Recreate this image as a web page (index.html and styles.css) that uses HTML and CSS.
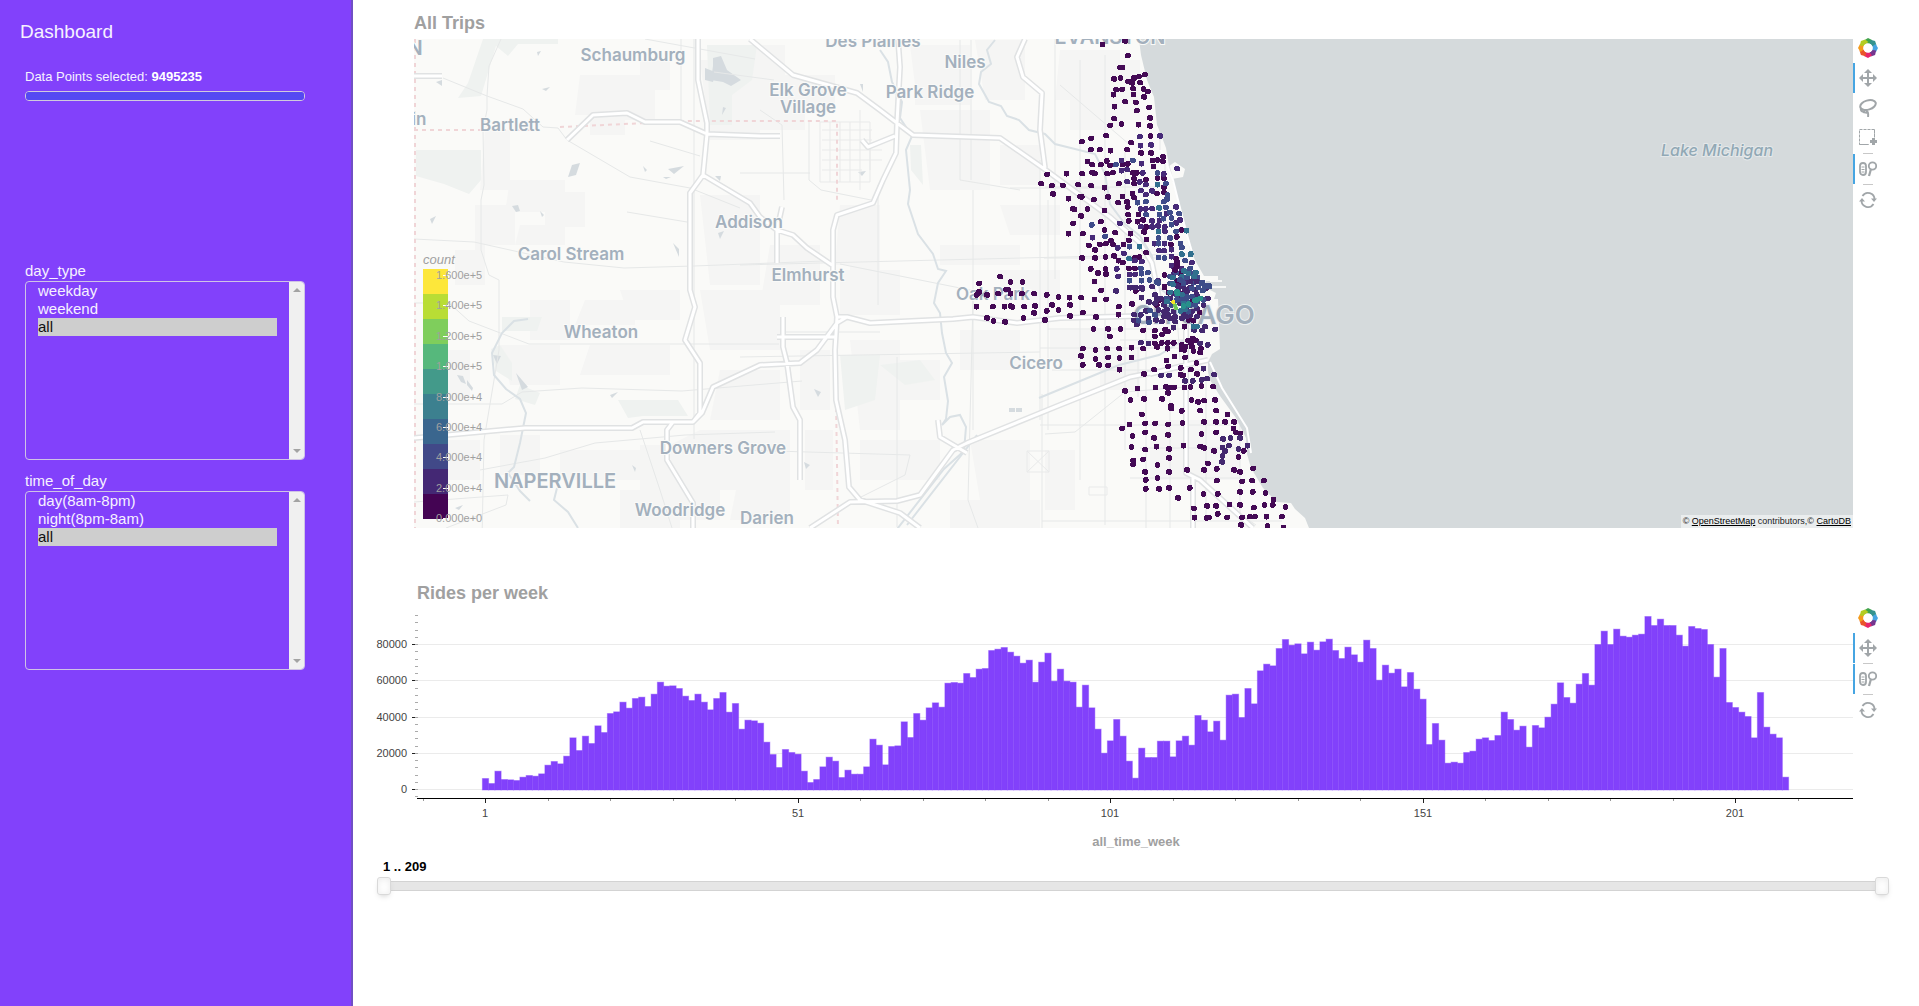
FILE: index.html
```html
<!DOCTYPE html>
<html lang="en">
<head>
<meta charset="utf-8">
<title>Dashboard</title>
<link rel="stylesheet" href="styles.css">
</head>
<body>
<svg class="defs" aria-hidden="true">
  <symbol id="i-logo" viewBox="-10 -10 20 20">
    <path d="M-4-7.500 0-10 4-8 4.500-4-2-4.800z" fill="#3fa34d"/>
    <path d="M-4-7.500 0-10 4-8 4.500-4-2-4.800z" fill="#34948f" transform="rotate(45)"/>
    <path d="M-4-7.500 0-10 4-8 4.500-4-2-4.800z" fill="#46a5e2" transform="rotate(90)"/>
    <path d="M-4-7.500 0-10 4-8 4.500-4-2-4.800z" fill="#75378f" transform="rotate(135)"/>
    <path d="M-4-7.500 0-10 4-8 4.500-4-2-4.800z" fill="#e6256c" transform="rotate(180)"/>
    <path d="M-4-7.500 0-10 4-8 4.500-4-2-4.800z" fill="#e9552b" transform="rotate(225)"/>
    <path d="M-4-7.500 0-10 4-8 4.500-4-2-4.800z" fill="#f39b1d" transform="rotate(270)"/>
    <path d="M-4-7.500 0-10 4-8 4.500-4-2-4.800z" fill="#b4cc22" transform="rotate(315)"/>
    <circle r="4.600" fill="#fff"/>
  </symbol>
  <symbol id="i-pan" viewBox="0 0 18 18">
    <path d="M9 0l4 4h-3v4h4V5l4 4-4 4v-3h-4v4h3l-4 4-4-4h3v-4H4v3L0 9l4-4v3h4V4H5z" fill="#a1a6a9"/>
  </symbol>
  <symbol id="i-lasso" viewBox="0 0 18 18">
    <g fill="none" stroke="#a1a6a9" stroke-width="2"><ellipse cx="9" cy="6" rx="8" ry="4.600" transform="rotate(-17 9 6)"/><path d="M2 9q-1 4 4 3.500M5 11q5 0 4 7M4 13l5 1"/></g>
  </symbol>
  <symbol id="i-box" viewBox="0 0 18 18">
    <path d="M.5 .5h15v15H.5z" fill="none" stroke="#a1a6a9" stroke-dasharray="3 1"/>
    <path d="M10 9h8v9h-8z" fill="#fff"/>
    <path d="M15.500 .5v6M.5 15.500h9" stroke="#a1a6a9" stroke-dasharray="3 1"/>
    <path d="M13 9h3v2h2v3h-2v2h-3v-2h-2v-3h2z" fill="#a1a6a9"/>
  </symbol>
  <symbol id="i-wheel" viewBox="0 0 18 18">
    <g fill="none" stroke="#a1a6a9" stroke-width="1.800"><rect x="1" y="3" width="6" height="12" rx="3"/><circle cx="13.500" cy="6" r="3.700"/><path d="M12 9l-2 7" stroke-width="2.200"/><path d="M2.500 7h3M2.500 9.500h3M2.500 12h3" stroke-width="1"/></g>
  </symbol>
  <symbol id="i-reset" viewBox="0 0 18 18">
    <g fill="none" stroke="#a1a6a9" stroke-width="1.800"><path d="M3.500 5A6.500 6.500 0 0 1 15.500 8.500M14.500 13A6.500 6.500 0 0 1 2.500 9.500"/></g>
    <path d="M12 7.500h6l-3 3.500zM0 10.500h6L3 7z" fill="#a1a6a9"/>
  </symbol>
</svg>

<div class="page">
  <aside class="sidebar">
    <h1 class="brand">Dashboard</h1>
    <div class="points">
      <label for="points-bar">Data Points selected: <b>9495235</b></label>
      <progress id="points-bar" value="1" max="1"></progress>
    </div>
    <div class="filters">
      <div class="filter">
        <label for="day-type">day_type</label>
        <div class="listbox">
          <select id="day-type" multiple>
            <option>weekday</option><option>weekend</option><option selected>all</option>
          </select>
          <span class="scrollbar"></span>
        </div>
      </div>
      <div class="filter">
        <label for="time-of-day">time_of_day</label>
        <div class="listbox">
          <select id="time-of-day" multiple>
            <option>day(8am-8pm)</option><option>night(8pm-8am)</option><option selected>all</option>
          </select>
          <span class="scrollbar"></span>
        </div>
      </div>
    </div>
  </aside>

  <main class="main">
    <section>
      <h2 class="title title-map">All Trips</h2>
      <div class="plot-row plot-row-map">
        <div class="map">
          <svg class="map-svg" viewBox="414 39 1439 489" role="img" aria-label="Map of all trips">
            <rect x="414" y="39" width="1439" height="489" fill="#fafaf8"/>
            <g fill="#f5f5f4">
              <path d="M580 75h60v-15h30v30h-15v30h-30v15h-35v-20h-15zM510 180h55v12h20v35h-40v-15h-40zM475 205h40v40h-30v40h-30v-35h20zM745 45h40v30h50v35h-30v20h-45v-30h-15zM600 100h20v15h-20zM520 225h45v20h-50zM485 130h25v60h-30z"/>
              <path d="M700 60h60v80h-50zM700 195h60v90h-50zM770 245h50v60h-60zM840 205h40v80h-30v-20h-15zM840 270h60v45h-60zM700 290h80v60h-70zM720 370h60v50h-70zM585 300h50v25h-60zM590 345h80v30h-90zM500 345h60v40h-50zM430 350h40v50h-40zM530 300h40v40h-40zM620 290h60v30h-50z"/>
              <path d="M700 430h90v60h-70v30h-60v-70zM560 450h80v30h-80zM500 435h40v40h-40zM430 440h50v40h-50zM620 490h60v38h-60zM740 470h50v50h-60zM800 350h30v60h-30zM805 430h28v60h-28zM850 340h50v90h-40zM880 360h60v40h-60zM860 440h80v40h-80zM950 500h90v28h-90zM640 445h30v50h-30z"/>
              <path d="M910 45h60v60h-55v-20zM975 40h50v60h-40zM920 110h70v80h-60zM1000 145h40v40h-40zM1060 50h60v80h-50v-30h-15zM940 245h80v20h-80zM1000 205h60v30h-50zM1070 180h60v40h-60zM1100 60h40v60h-40zM960 330h60v40h-60zM1050 330h60v30h-60zM970 440h60v60h-50zM1045 450h30v60h-30zM1100 350h40v40h-40zM1150 420h60v60h-60zM1210 440h30v40h-30zM1000 270h60v30h-60z"/>
            </g>
            <g fill="#eff2f0">
              <path d="M458 98l10-15 15-44h75v5h-40l-10 12-12-10-15 50zM416 150h65v30l-12 14-25-10-28-8zM707 45h50l-5 35-20 15v30h-22zM500 345l12 18v18l-16-10-5-22zM618 400h60l10 16h-45l-15 2zM910 145h11l2 40-12-15zM840 355h40l-5 45-30 10zM520 385l20 8-5 12-20-6zM502 317h40l-5 14h-35zM880 365l40-5 15 20-30 5z"/>
            </g>
            <g fill="#d5dbdf">
              <path d="M713 58l8-2 6 14 14 10-10 6-8-4-12-2 2-14zM705 68l10 4-2 10-8-2zM572 165l8-2-4 12-8 2 2-6zM436 82l6-2v6zM542 89l8-2-4 4zM537 52l4-1-3 5zM668 169l16-3-10 8zM643 166l4 4-2 2zM663 177l8 0-5 2zM512 206l6-1 2 6-4 1zM540 211l4 4-2 2zM673 243l6 6v8zM718 233l6-2-4 8zM430 219l6-3-4 8zM715 176l6 0-1 5zM610 395l8-3-6 6zM457 375l6 1 3 8-5-2zM467 380l6 8-1 3-5-6zM516 373l12 14-6 3zM493 355l8 1-4 8zM860 84l3 0v8zM833 149l4 5zM858 172l8-1-4 5zM742 150l6 3zM814 389l7 3-3 5zM804 462l6 3-4 4zM1009 408h6v4h-6zM1016 408h6v4h-6zM723 107l3 1-4 7zM632 465l4 3-1 4zM455 508l8-3-4 5z"/>
            </g>
            <g fill="none" stroke="#e6e8e8">
              <path d="M443 78l44 18 36 13 20 18 15 1 9 12 63 37 60 11 50 20M487 96l2-30 12-27M487 96v14l-4 20 1 55-3 15v50l8 25 10 5v70l-15 90-2 100M414 239l60 3 90 20 60 6 70-2 130-5M414 303l35 0 20 18 60 23h250M414 404h88l20-12 60-4 100 3 120-10M480 470l65-12 50-15 90-8 90-3M414 502l94-7-2 10-60 23M694 39v400M681 39v86M714 72l60 8M627 212l60 10M650 141l50 15M645 39l110 20M760 110l22 15 2 75M809 120v60l12 10 50 10M740 173h70M640 430l20 60 12 38M740 265l200-5 330-8M840 264l140 28M878 185v120M780 332h100M740 357l300-5M897 357v170M971 40v140M973 190v240M973 300l-5 200 10 28M740 450l170 5-5 20-50 25M960 40v140l60 10M1040 160v260M1045 187h110M1010 188h100M1044 258h140M1048 200v230M1055 39v240M1060 85l70 60M1080 60v420M1105 55v470M1125 150v300M1146 300v228M1160 90v60M1048 329h150M1040 348h160M1045 434l30-2 50-40 60-5M1040 425h190M1052 370h150M1042 521h240M1138 347v50M1170 400v128M1206 380v140M1240 425v100M1042 394v134M1140 448h105M1130 478h110M1120 340h80M1165 160v100"/>
              <path d="M1169 165l10 38 12 46 14 26M1176 300l4 60M1226 505l30 20M1210 360l20 40 22 35"/>
            </g>
            <g fill="none" stroke="#e9eaea"><path d="M820 122h50v60h-50zM822 130h50M822 140h50M822 150h60M822 160h60M822 170h40M830 122v60M840 122v60M850 122v60M860 110v80M870 130v40M1027 451h22v21h-22zM1027 451l22 21M1049 451l-22 21M1089 487h18v8h-18z"/></g>
            <g fill="none" stroke="#dae1e5" stroke-width="2">
              <path d="M528 319l-14 2-12 12-10 20 2 22 12 14 14 10 6 14-6 30-6 24-6 6 12 18 10 10M557 488l-3 12 14 12 10 16M880 50l8 12 4 20 10 20-2 16 12 18-6 14 4 40-2 14 10 30 15 20 5 15 8 2-8 12-4 20 6 10 2 20 4 20 6 10-8 14 4 24-2 18-4 6 8-8 10-2 6 12-2 24-20 18-50 64"/>
              <path d="M995 40l-8 10 4 14-10 8-2 12 10 18 12 4 6 10 12 4 10 10 16 4 10 10 16 4 24 6 10 20 5 30 15 20 15 12 12 20 5 30 25 20M1179 280l10 20-5 40-25 15-40 10-80 33M907 525l70-90"/>
            </g>
            <path d="M415 39v489M414 130h125M560 127l130-6h147v80M836 400l2 128" fill="none" stroke="#f0d5d7" stroke-width="2" stroke-dasharray="4 4"/>
            <g class="roads">
              <path id="roads" d="M414 76h28M567 140l26-25 34-2 18 9h35l27 12 53 2h20M698 39v41l9 43v11l-4 41-13 18v97l5 17-10 33 15 23v50l-7 9M414 438l111-10h107l11-6h50l9-9 11-26 47-22 40-2 17-13 20-27 10-6M673 422l-6 8v30l26 43v25M703 175l47 28 10 14 17 13 16 5 14 13 25 17M750 39l13 11 30 25 64 18 23 17 17 13 16 12 87 3 43 30 67 49 30 26 12 20 10 50M898 39l2 28-3 56-1 30-13 27-10 23-36 12-4 15v67l4 20-2 33 1 50 9 40 4 47 11 13 40 13 20 15M837 317h10l23 6 83-4 20-2 44 6 43-5 80-2M810 528l40-26 47-1 23-6 33-45 14-7 93-38 70-28 20-4M1025 39l-8 18 6 20 19 16-2 37 5 38M782 207l-5 23v33M783 317v30l4 16 6 44 7 13v60M777 337h58M862 140l6 7 27-11M938 420l2 17 27 16M1186 320v153l14 7 53 48M1193 477v51M1150 374l40-10 18-4"/>
              <use href="#roads" class="road-core"/>
            </g>
            <path d="M1139 39l2 16 6 25 7 17 3 28 3 7 6 16 3 18 6-4 10 7-2 8-11 2 6 20 8 28 4 22 6 13 8 14h14v5h-12l-2 6 12 6-2 6h4l2 50-8 5-4 8v10l2 8 10 16 16 22 10 20 1 16 4 14 12 20 14 14L1291 503 1295 509 1305 518 1309 528H1853V39z" fill="#d5dadc"/>
            <path d="M1210 281h12M1210 287h16" stroke="#f7f8f7" stroke-width="2"/>
            <path d="M1161 150l12 30 12 48 7 24M1210 362l12 26 25 40 4 25" fill="none" stroke="#fff" stroke-width="2"/>
            <g class="places">
              <text x="633" y="61">Schaumburg</text><text x="510" y="131">Bartlett</text>
              <text x="571" y="260">Carol Stream</text><text x="601" y="338">Wheaton</text>
              <text x="723" y="454">Downers Grove</text><text x="680" y="516">Woodridge</text>
              <text x="767" y="524">Darien</text><text x="749" y="228">Addison</text>
              <text x="808" y="281">Elmhurst</text><text x="808" y="96">Elk Grove</text>
              <text x="808" y="113">Village</text><text x="930" y="98">Park Ridge</text>
              <text x="965" y="68">Niles</text><text x="873" y="47">Des Plaines</text>
              <text x="993" y="300">Oak Park</text><text x="1036" y="369">Cicero</text>
              <text x="419" y="125">in</text>
              <text class="city" x="555" y="488">NAPERVILLE</text><text class="city" x="1110" y="44">EVANSTON</text>
              <text class="city" x="415" y="55">N</text><text class="metro" x="1194" y="324">CHICAGO</text>
              <text class="lake" x="1717" y="156">Lake Michigan</text>
            </g>
            <g id="trips" shape-rendering="crispEdges"></g>
            <g class="legend" id="legend"><text class="legend-title" x="423" y="264">count</text></g>
          </svg>
          <div class="attribution">© <a href="#">OpenStreetMap</a> contributors,© <a href="#">CartoDB</a></div>
        </div>
        <div class="toolbar">
          <svg class="logo"><use href="#i-logo"/></svg>
          <button class="tool active" aria-label="Pan"><svg><use href="#i-pan"/></svg></button>
          <button class="tool" aria-label="Lasso select"><svg><use href="#i-lasso"/></svg></button>
          <button class="tool" aria-label="Box select"><svg><use href="#i-box"/></svg></button>
          <span class="divider"></span>
          <button class="tool active" aria-label="Wheel zoom"><svg><use href="#i-wheel"/></svg></button>
          <span class="divider"></span>
          <button class="tool" aria-label="Reset"><svg><use href="#i-reset"/></svg></button>
        </div>
      </div>
    </section>

    <section class="rides">
      <h2 class="title title-rides">Rides per week</h2>
      <div class="plot-row">
        <svg class="chart" id="chart" viewBox="370 608 1483 251" role="img" aria-label="Rides per week"></svg>
        <div class="toolbar">
          <svg class="logo"><use href="#i-logo"/></svg>
          <button class="tool active" aria-label="Pan"><svg><use href="#i-pan"/></svg></button>
          <span class="divider"></span>
          <button class="tool active" aria-label="Wheel zoom"><svg><use href="#i-wheel"/></svg></button>
          <span class="divider"></span>
          <button class="tool" aria-label="Reset"><svg><use href="#i-reset"/></svg></button>
        </div>
      </div>
      <div class="range">
        <label class="range-label" for="week-from">1 .. 209</label>
        <div class="range-track">
          <input id="week-from" type="range" min="1" max="209" value="1">
          <input type="range" min="1" max="209" value="209" aria-label="Last week">
        </div>
      </div>
    </section>
  </main>
</div>
<script src="app.js"></script>
</body>
</html>
```
FILE: styles.css
```css
* { box-sizing: border-box; }
body { margin: 0; background: #fff; font-family: "Liberation Sans", Arial, sans-serif; }
.defs { position: absolute; width: 0; height: 0; }
.page { display: flex; min-height: 100vh; }

.sidebar { flex: none; width: 353px; padding: 20px 48px 0 25px; background: #8241fb; border-right: 2px solid #7050c4; color: #f6f1ff; }
.brand { margin: 0 0 0 -5px; font-size: 19px; line-height: 24px; font-weight: 400; }
.points { margin-top: 25px; font-size: 13px; line-height: 15px; }
.points label { display: block; }
.points b { color: #fff; }
progress { display: block; appearance: none; width: 280px; height: 10px; margin-top: 7px; border: 1px solid #d0cbdc; border-radius: 4px; background: #5549f2; overflow: hidden; }
progress::-webkit-progress-bar { background: #5549f2; }
progress::-webkit-progress-value { background: #5549f2; }
.filters { display: flex; flex-direction: column; gap: 12px; margin-top: 161px; }
.filter { width: 280px; font-size: 15px; line-height: 17px; }
.filter label { display: block; padding-bottom: 2px; }
.listbox { position: relative; border: 1px solid #cfc3e6; border-radius: 4px; overflow: hidden; }
select { display: block; width: 100%; height: 177px; padding: 0 27px 0 12px; border: 0; background: transparent; color: #f6f1ff; font: inherit; overflow-y: scroll; scrollbar-width: none; outline: 0; }
option { min-height: 18px; padding: 0; line-height: 18px; }
.scrollbar { position: absolute; top: 0; right: 0; bottom: 0; width: 15px; background: #f0f0f0; }
.scrollbar::before, .scrollbar::after { content: ""; position: absolute; left: 4px; border: solid transparent; border-width: 0 4px; }
.scrollbar::before { top: 6px; border-bottom: 4px solid #a3a3a3; }
.scrollbar::after { bottom: 6px; border-top: 4px solid #a3a3a3; }

.main { flex: 1; min-width: 0; padding: 13px 30px 0 17px; }
.title { margin: 0; font-size: 18px; line-height: 21px; color: #a0a0a0; }
.title-map { padding-left: 44px; margin-bottom: 4px; }
.title-rides { padding-left: 47px; margin-bottom: 4px; }
.plot-row { display: flex; align-items: flex-start; padding-right: 6px; }
.plot-row-map { padding-left: 44px; }
.rides { margin-top: 55px; }

.map { position: relative; flex: 1; min-width: 0; margin-top: 1px; }
.map-svg, .chart { display: block; }
.map-svg { width: 100%; overflow: hidden; }
.chart { flex: 1; min-width: 0; }
.roads { fill: none; stroke: #e0e2e3; stroke-width: 6; stroke-linejoin: round; }
.road-core { stroke: #fff; stroke-width: 3; }
.places { font: 600 17px Inter, sans-serif; fill: #a3b0bd; text-anchor: middle; stroke: #fafaf8; stroke-width: 2; paint-order: stroke; }
.places .city { font-size: 20px; }
.places .metro { font-size: 26px; stroke: #edf0f1; }
.places .lake { font-size: 16px; font-style: italic; font-weight: 500; fill: #91a8b5; stroke: #e4e8ea; }
.legend text { font-size: 11px; fill: #a0a0a0; }
.legend .legend-title { font-size: 13px; font-style: italic; }
.attribution { position: absolute; right: 0; bottom: 0; padding: 0 2px; background: rgba(255, 255, 255, .5); font-size: 9px; line-height: 13px; color: #222; }
.attribution a { color: #000; }

.toolbar { flex: none; display: flex; flex-direction: column; align-items: center; width: 30px; }
.logo { width: 20px; height: 20px; margin-bottom: 5px; }
.tool { display: grid; place-items: center; width: 30px; height: 30px; padding: 0; border: 0; background: none; }
.tool.active { border-left: 2px solid #46a5e2; padding-right: 2px; }
.tool svg { width: 18px; height: 18px; }
.divider { width: 10px; height: 1px; background: #c8c8c8; }

.chart text { font-size: 11px; fill: #444; }
.chart .axis-title { font-size: 13px; font-weight: 700; fill: #a0a0a0; text-anchor: middle; }

.range { margin-left: 7px; }
.range-label { display: block; padding-left: 6px; font-size: 13px; line-height: 15px; font-weight: 700; }
.range-track { display: grid; height: 18px; margin-top: 3px; background: linear-gradient(#d3d3d3, #d3d3d3) 7px 4px / calc(100% - 14px) 1px no-repeat, linear-gradient(#d3d3d3, #d3d3d3) 7px 13px / calc(100% - 14px) 1px no-repeat, linear-gradient(#e6e6e6, #e6e6e6) 7px 4px / calc(100% - 14px) 10px no-repeat; }
.range-track input { grid-area: 1 / 1; appearance: none; width: 100%; height: 18px; margin: 0; background: none; pointer-events: none; }
.range-track input::-webkit-slider-thumb { appearance: none; width: 14px; height: 18px; border: 1px solid #d9d9d9; border-radius: 3px; background: #fff; box-shadow: inset 0 0 1px #fff, inset 0 1px 7px #ebebeb, 0 3px 6px -3px #bbb; pointer-events: auto; }
```
FILE: app.js
```js
const NS = 'http://www.w3.org/2000/svg';
function add(parent, name, attrs, text) {
  const el = document.createElementNS(NS, name);
  for (const key in attrs) el.setAttribute(key, attrs[key]);
  if (text !== undefined) el.textContent = text;
  parent.appendChild(el);
}

// Pickup stations, grouped by map tile and by count colour; three units to a pixel.
const tiles = [
  { x: 1000, y: 30, points: {
    '#440a55': '307,43 375,33 383,77 360,112 367,112 434,134 342,147 361,144 384,154 396,159 402,144 416,140 420,158 348,179 366,178 340,194 399,176 400,193 430,177 443,185 432,201 375,215 343,230 407,217 410,242 447,232 342,266 364,282 330,286 415,284 450,264 450,288 318,317 273,325 245,335 393,338 451,318 272,359 299,359 331,362 381,359 423,369 453,369 489,380 262,394 276,404 302,404 320,393 330,406 368,404 383,402 457,391 472,390 488,394 460,409 141,433 199,431 246,431 276,427 284,431 321,431 338,428 399,429 410,429 402,446 437,449 472,444 491,445 123,461 155,467 188,466 234,464 273,467 313,473 356,461 402,461 491,472 159,492 397,490 470,490 492,488 205,506 240,499 245,501 324,501 367,499 402,503 281,509 354,518 381,516 219,537 223,538 262,537 313,541 383,531 243,558 384,554 415,553 302,575 219,580 386,573 412,575 429,570 205,611 248,611 313,600 345,608 391,611 438,591 544,600 432,606 386,631 439,628 530,621 266,646 299,643 317,641 332,632 338,643 370,643 512,643 285,660 438,668 246,684 285,684 316,681 342,678 355,692 368,698 404,683 417,681 528,686 530,700 272,717 316,717 386,715 404,715 530,710 293,729 318,733 283,754 493,735 531,753 493,770 540,730',
    '#472a78': '419,320 480,318 421,347 453,345 531,416 364,391 424,401 381,419 364,422 428,429 491,432 419,456 381,455 437,464 422,482 456,483 437,494 421,537 437,537 456,536 528,531 499,551 359,580 456,573 478,572 540,570 528,579 422,590 456,591 474,588 494,591 494,604 277,623 353,654 463,641 493,641 371,670 477,662 492,662 514,659 404,692 425,695 514,680 350,717 575,698 514,707 544,715 354,739 388,733 405,733 424,751 448,750 473,752 560,756 388,772 405,772 425,772 456,770 540,770 522,730',
    '#3f4c8a': '347,404 398,391 472,429 497,461 502,495 412,518 437,515 491,515 501,507 497,532 438,554 478,554 509,547 537,551 275,585 490,566 514,564 514,584 528,604 315,619 475,624 510,624 388,650 475,641 541,641 545,653 475,682 493,684 422,715 555,692 424,731 443,728 528,728 568,727 585,727 560,742 592,743 388,751 580,758 606,757 627,768 545,750',
    '#31708e': '472,464 477,534 475,604 559,602 418,650 387,686 545,673 571,673 517,742 552,723 545,740 517,760' } },
  { x: 740, y: 30, points: {
    '#440a55': '780,740 717,760 811,756 847,756 717,785 709,795 714,790 741,795 774,791 798,778 804,779 811,791 845,791 882,791 920,795 709,830 758,830 793,830 811,828 817,831 852,830 885,828 936,825 882,849 920,843 741,864 760,873 795,876 850,864 915,870' } },
  { x: 1040, y: 250, points: {
    '#440a55': '152,57 174,69 198,72 163,94 183,121 287,123 20,135 55,141 88,143 123,143 163,148 198,148 36,165 90,165 20,183 55,180 128,188 90,198 168,201 236,170 235,194 276,162 14,210 160,237 204,237 241,237 209,259 309,241 344,242 344,259 128,296 166,300 201,296 237,296 274,293 309,296 123,318 166,327 204,322 238,324 274,322 128,345 177,345 204,346 238,359 344,280 365,279 383,279 401,279 351,291 382,296 403,319 435,322 379,331 384,349 422,354 452,359 469,339 342,359 312,372 421,374 429,376 471,372 255,423 292,415 346,412 378,411 390,412 402,412 433,412 451,411 484,408 519,410 384,429 366,447 312,447 271,450 454,450 474,456 492,452 525,450 393,468 393,476 425,483 480,482 528,482 562,493 305,493 246,535 268,523 315,520 345,520 384,523 427,519 492,516 528,516 555,516 582,516 277,558 315,547 342,564 384,555 484,552 528,547 580,535 587,547 600,550 611,603 595,621 522,603 492,594 480,589 430,587 349,590 274,591 315,599 387,597 387,624 309,628 279,631 279,643 352,645 315,666 387,666 441,660 492,660 503,640 530,657 582,660 600,666 639,655 317,690 352,684 530,692 606,694 636,692 671,692 317,717 357,717 387,714 449,714 414,744 490,732 533,732 600,726 638,726 676,729 700,748 461,775 501,768 528,768 568,763 600,765 641,773 673,765 698,765 736,771 463,803 500,804 506,802 533,792 561,802 606,802 629,800 644,800 679,800 725,800 603,825 682,828 730,832 373,112 373,75 417,102 385,128 430,130 440,170 457,150 350,165 358,150 478,187 445,210 460,212 433,230 375,238 383,245 366,253 444,272 458,265 468,272 452,278 425,285 432,300 424,298 436,290 455,290 460,303 482,296 480,308 410,50 405,60 412,38',
    '#43286f': '302,278 325,280 490,356 522,374 363,376 387,376 435,393 458,393 485,390 501,386 549,567 571,564 600,564 566,587 622,587 547,592 595,597 555,603 547,618 546,636 228,123 271,113 287,113 306,117 336,110 304,143 327,156 282,194 290,224 281,211 318,183 302,195 325,205 345,135 362,145 375,155 372,165 350,150 345,160 390,145 355,180 372,185 372,200 390,205 405,200 405,215 425,205 430,190 440,200 470,175 365,215 348,210 400,233 415,120 428,110 450,112 465,120 440,125 470,135 503,145 490,165 470,200 400,130 380,178 400,185 420,160 495,230 486,242 525,238 503,285 462,240 480,280 450,95 470,95 460,85 498,115 385,195 455,185 450,195 412,108 422,140 435,118',
    '#3d4d89': '350,95 354,99 328,90 304,92 268,92 323,68 390,100 430,100 485,100 495,108 507,110 420,90 440,140 455,140 425,150 440,155 450,165 465,165 430,175 445,185 410,150 395,165 380,145 330,182 295,212 327,217 345,195 475,112 488,122 455,115 410,135 490,150 472,155 440,82 450,55 390,80',
    '#31708e': '398,83 398,103 390,127 425,133 422,183 435,178 445,165 430,160 460,230 470,229 445,70 462,80 467,68 424,12 452,12 380,155',
    '#28908b': '410,125 412,130 480,145 470,150 465,152 430,168 445,162',
    '#70c957': '404,166 408,175',
    '#f4e628': '400,156' } }
];
const trips = document.getElementById('trips');
for (const tile of tiles) {
  for (const color in tile.points) {
    const d = tile.points[color].split(' ').map(p => 'M' + p + 'h1').join('');
    add(trips, 'path', { d, stroke: color, 'stroke-width': color === '#f4e628' || color === '#70c957' ? 12 : 17, 'stroke-linecap': 'round',
      transform: `translate(${tile.x} ${tile.y}) scale(${1 / 3})` });
  }
}

// Count legend
const legend = document.getElementById('legend');
['#fde73a', '#b9dd35', '#7fce5c', '#56b87c', '#439a8a', '#3c808f', '#3a668e', '#414988', '#442874', '#440453']
  .forEach((fill, i) => add(legend, 'rect', { x: 423, y: 269 + i * 25, width: 25, height: 25, fill }));
['1.600e+5', '1.400e+5', '1.200e+5', '1.000e+5', '8.000e+4', '6.000e+4', '4.000e+4', '2.000e+4', '0.000e+0']
  .forEach((label, i) => {
    const y = Math.round(275 + i * 30.4);
    add(legend, 'rect', { x: 443, y, width: 5, height: 1, fill: '#fff' });
    add(legend, 'text', { x: 436, y: y + 4 }, label);
  });

// Weekly rides, in units of 184 rides
const rides = [33,18,55,30,29,27,37,42,40,47,73,84,77,100,155,117,160,138,191,171,228,233,262,244,273,277,249,286,322,310,311,303,280,267,286,262,239,273,291,232,258,181,208,206,199,142,105,66,120,111,106,55,21,30,68,97,85,36,58,46,46,68,151,133,74,
129,131,203,156,228,208,245,260,247,319,321,319,348,336,361,363,417,421,426,412,400,379,388,322,382,409,325,361,325,322,247,313,245,181,109,146,210,160,85,34,124,96,96,145,145,98,146,160,133,222,208,173,205,148,283,286,216,303,257,356,376,371,423,450,433,437,407,442,418,443,451,417,393,427,404,382,448,423,328,373,349,361,
308,351,301,271,135,198,148,79,82,79,111,115,151,155,147,162,232,210,178,190,127,192,185,217,256,320,276,259,316,348,313,435,475,435,481,460,457,463,466,519,492,511,492,492,463,430,489,483,480,435,337,423,261,246,232,219,155,291,187,166,155,37];
const chart = document.getElementById('chart');
const weekX = week => 485.5 + (week - 1) * 6.25;
const valueY = value => 789.5 - value * 36.25 / 20000;
for (let v = 0; v <= 80000; v += 20000) {
  const y = Math.round(valueY(v) - 0.5);
  add(chart, 'rect', { x: 418, y, width: 1435, height: 1, fill: '#ebebeb' });
  add(chart, 'rect', { x: 412, y, width: 6, height: 1, fill: '#222' });
  add(chart, 'text', { x: 407, y: y + 4, 'text-anchor': 'end' }, v);
}
for (let v = -4000; v <= 96000; v += 4000) {
  add(chart, 'rect', { x: 415, y: Math.round(valueY(v) - 0.5), width: 3, height: 1, fill: '#aaa' });
}
rides.forEach((r, i) => add(chart, 'rect', {
  x: weekX(i + 1) - 3.125, y: 789.5 - r / 3, width: 6.25, height: r / 3 + 0.5,
  fill: '#8241fb', stroke: '#8241fb', 'stroke-opacity': 0.4
}));
add(chart, 'rect', { x: 417, y: 798, width: 1436, height: 1, fill: '#000' });
for (let w = -9; w <= 211; w += 10) {
  const major = w > 0 && w % 50 === 1;
  const x = Math.floor(weekX(w));
  add(chart, 'rect', { x, y: 799, width: 1, height: major ? 4 : 2, fill: major ? '#222' : '#999' });
  if (major) add(chart, 'text', { x, y: 817, 'text-anchor': 'middle' }, w);
}
add(chart, 'text', { x: 1136, y: 846, class: 'axis-title' }, 'all_time_week');
```
